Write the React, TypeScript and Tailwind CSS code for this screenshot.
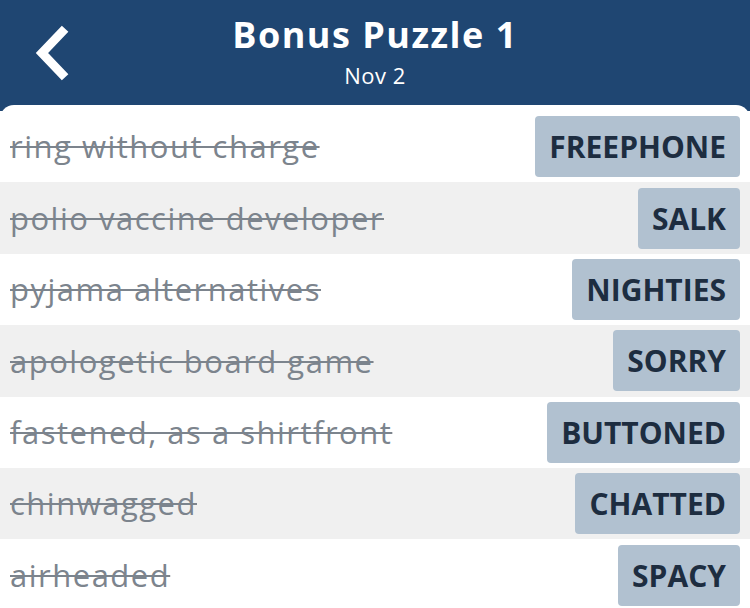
import React from "react";

const clues = [
  { clue: "ring without charge", answer: "FREEPHONE" },
  { clue: "polio vaccine developer", answer: "SALK" },
  { clue: "pyjama alternatives", answer: "NIGHTIES" },
  { clue: "apologetic board game", answer: "SORRY" },
  { clue: "fastened, as a shirtfront", answer: "BUTTONED" },
  { clue: "chinwagged", answer: "CHATTED" },
  { clue: "airheaded", answer: "SPACY" },
];

function BackIcon() {
  return (
    <svg width="40" height="56" viewBox="0 0 40 56" className="block">
      <polyline
        points="30,7 10,28 30,49"
        fill="none"
        stroke="white"
        strokeWidth="9"
        strokeLinecap="square"
      />
    </svg>
  );
}

export default function App() {
  return (
    <div className="w-[750px] h-[608px] overflow-hidden bg-[#1f4672] font-['Open_Sans','Noto_Sans',sans-serif]">
      <div className="relative h-[105px] flex flex-col items-center text-white">
        <div className="absolute left-[32px] top-[25px]">
          <BackIcon />
        </div>
        <div className="mt-[10px] text-[36px] font-bold leading-[50px] tracking-[1.5px]">
          Bonus Puzzle 1
        </div>
        <div className="text-[22px] leading-[30px] tracking-[0.5px]">Nov 2</div>
      </div>
      <div className="bg-white rounded-t-[14px] pt-[6px]">
        {clues.map((c, i) => (
          <div
            key={c.answer}
            className={
              "h-[71.4px] flex items-center justify-between pl-[10px] pr-[10px] " +
              (i % 2 === 1 ? "bg-[#f0f0f0]" : "bg-white")
            }
          >
            <span className="text-[31px] text-[#7c848d] line-through decoration-[2px] tracking-[1.5px] whitespace-nowrap">
              {c.clue}
            </span>
            <span className="h-[61px] flex items-center px-[14px] rounded-[4px] bg-[#b1c1d0] text-[#1d2d40] text-[30px] font-bold">
              {c.answer}
            </span>
          </div>
        ))}
      </div>
    </div>
  );
}
